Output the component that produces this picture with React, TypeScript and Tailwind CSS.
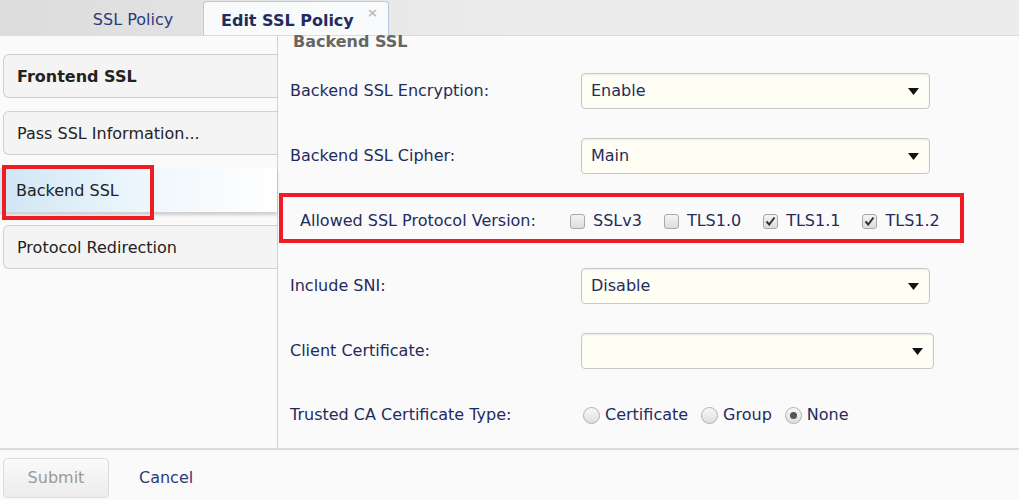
import React from 'react';

const font = { fontFamily: '"DejaVu Sans", Verdana, sans-serif' };

function Select({ value, wide }: { value: string; wide?: boolean }) {
  return (
    <div className={`flex h-[36px] ${wide ? 'w-[353px]' : 'w-[349px]'} items-center justify-between rounded-[4px] border border-[#c8c8c8] bg-[#fffef5] pl-[9px] pr-[10px] text-[#1f2c5c] shadow-[inset_0_1px_2px_rgba(0,0,0,0.08)]`}>
      <span>{value}</span>
      <svg width="11" height="7" viewBox="0 0 11 7"><path d="M0 0h11L5.5 7z" fill="#111" /></svg>
    </div>
  );
}

function Check({ label, checked }: { label: string; checked?: boolean }) {
  return (
    <span className="flex items-center gap-[8px]">
      <span className="flex h-[15px] w-[15px] items-center justify-center rounded-[3px] border border-[#a8a8a8] bg-gradient-to-b from-[#f4f4f4] to-[#dcdcdc]">
        {checked && <svg width="11" height="10" viewBox="0 0 11 10"><path d="M1.5 5.5L4.2 8.5L9.5 1.5" stroke="#333" strokeWidth="2" fill="none" /></svg>}
      </span>
      {label}
    </span>
  );
}

function Radio({ label, checked }: { label: string; checked?: boolean }) {
  return (
    <span className="flex items-center gap-[5px]">
      <span className="flex h-[17px] w-[17px] items-center justify-center rounded-full border border-[#b0b0b0] bg-gradient-to-b from-[#f8f8f8] to-[#dedede]">
        {checked && <span className="h-[7px] w-[7px] rounded-full bg-[#555]" />}
      </span>
      {label}
    </span>
  );
}

const navItems = ['Frontend SSL', 'Pass SSL Information...', 'Backend SSL', 'Protocol Redirection'];

export default function App() {
  return (
    <div style={font} className="relative h-[500px] w-[1019px] overflow-hidden bg-[#fafafa] text-[16px] text-[#1f2c5c]">
      {/* Tabs */}
      <div className="flex h-[36px] items-end border-b border-[#dcdcdc] bg-gradient-to-r from-[#dcdcdc] via-[#ececec] to-[#ececec] pl-[64px]">
        <div className="flex h-[36px] w-[139px] items-center justify-center border-r border-[#e4e4e4] pt-[6px] text-[#2c3a7a]">SSL Policy</div>
        <div className="relative flex h-[34px] w-[186px] items-center rounded-t-[4px] border border-b-0 border-[#b8c8e0] bg-[#f8fafc] pl-[17px] pt-[4px] font-bold text-[#1f2c5c]">
          Edit SSL Policy
          <span className="absolute right-[10px] top-[1px] text-[13px] font-bold text-[#bbb]">×</span>
        </div>
      </div>

      <div className="flex h-[412px]">
        {/* Sidebar */}
        <div className="flex w-[278px] flex-col gap-[13px] border-r border-[#d0d0d0] pt-[18px]">
          {navItems.map((n, i) =>
            i === 2 ? (
              <div key={n} className="flex h-[44px] items-center bg-gradient-to-r from-[#cfe6f5] via-[#eef6fc] to-[#ffffff] pl-[16px] pt-[2px] text-[#222] shadow-[0_3px_3px_rgba(0,0,0,0.18)]">{n}</div>
            ) : (
              <div key={n} className={`ml-[3px] flex h-[44px] items-center rounded-l-[6px] border border-r-0 border-[#d0d0d0] bg-[#f4f4f4] pl-[13px] pt-[2px] text-[#222] ${i === 0 ? 'font-bold' : ''}`}>{n}</div>
            )
          )}
        </div>

        {/* Content */}
        <div className="flex-1 text-[#1f2c5c]">
          <div className="-mt-[6px] h-[20px] pl-[15px] font-bold text-[#666]">Backend SSL</div>
          <div className="flex flex-col pl-[12px]">
            <div className="mt-[23px] flex h-[36px] items-center"><span className="w-[291px]">Backend SSL Encryption:</span><Select value="Enable" /></div>
            <div className="mt-[29px] flex h-[36px] items-center"><span className="w-[291px]">Backend SSL Cipher:</span><Select value="Main" /></div>
            <div className="mt-[29px] flex h-[36px] items-center pl-[10px]">
              <span className="w-[270px]">Allowed SSL Protocol Version:</span>
              <div className="flex items-center gap-[22px]">
                <Check label="SSLv3" />
                <Check label="TLS1.0" />
                <Check label="TLS1.1" checked />
                <Check label="TLS1.2" checked />
              </div>
            </div>
            <div className="mt-[29px] flex h-[36px] items-center"><span className="w-[291px]">Include SNI:</span><Select value="Disable" /></div>
            <div className="mt-[29px] flex h-[36px] items-center"><span className="w-[291px]">Client Certificate:</span><Select value="" wide /></div>
            <div className="mt-[34px] flex h-[24px] items-center">
              <span className="w-[293px]">Trusted CA Certificate Type:</span>
              <div className="flex items-center gap-[13px]">
                <Radio label="Certificate" />
                <Radio label="Group" />
                <Radio label="None" checked />
              </div>
            </div>
          </div>
        </div>
      </div>

      {/* Footer */}
      <div className="flex items-center gap-[30px] border-t-2 border-[#dcdcdc] pl-[3px] pt-[8px]">
        <div className="flex h-[40px] w-[106px] items-center justify-center rounded-[4px] border border-[#dcdcdc] bg-gradient-to-b from-[#fafafa] to-[#ececec] text-[#999]">Submit</div>
        <span className="text-[#2c3a7a]">Cancel</span>
      </div>

      {/* Annotation boxes */}
      <div className="pointer-events-none absolute left-[2px] top-[165px] h-[55px] w-[152px] border-[4px] border-[#ee1c25]" />
      <div className="pointer-events-none absolute left-[279px] top-[193px] h-[50px] w-[685px] border-[4px] border-[#ee1c25]" />
    </div>
  );
}
